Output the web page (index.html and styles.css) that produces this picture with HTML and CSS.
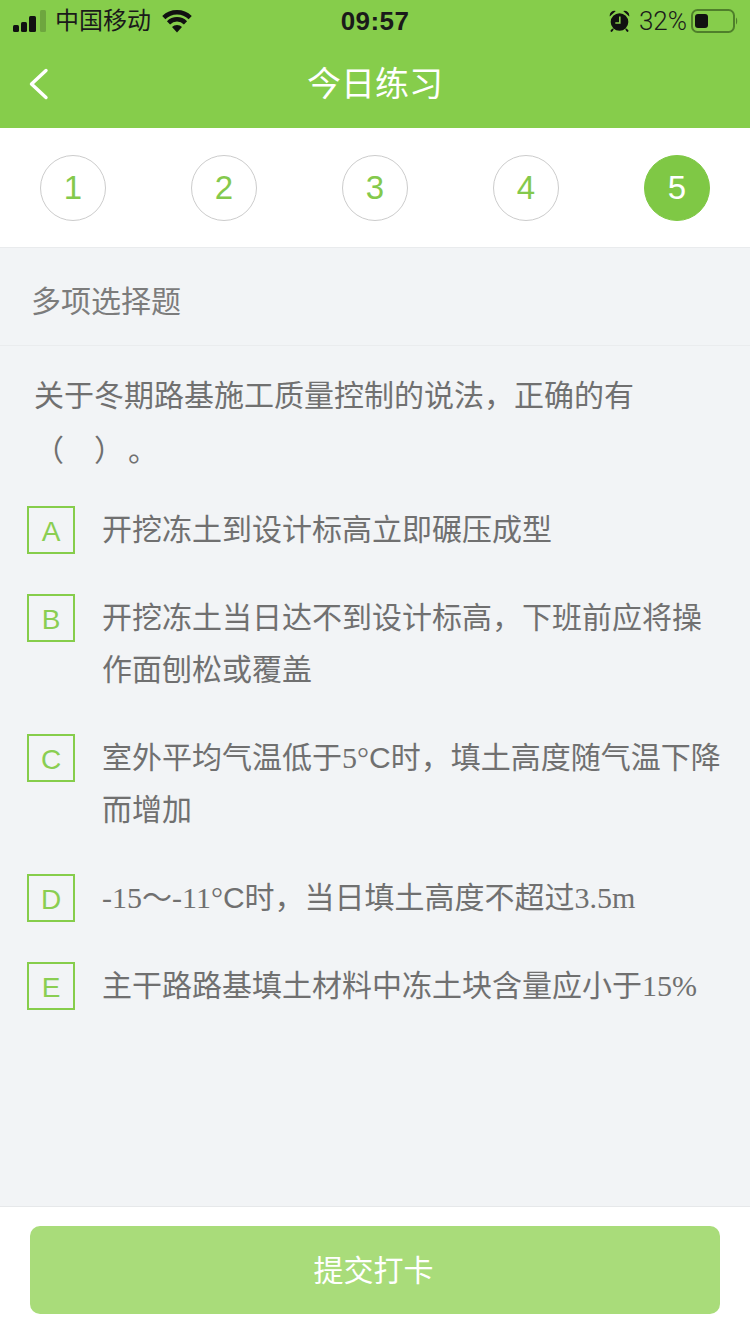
FILE: index.html
```html
<!DOCTYPE html>
<html lang="zh-CN">
<head>
<meta charset="utf-8">
<title>今日练习</title>
<link rel="stylesheet" href="styles.css">
</head>
<body>
<div class="page">
  <header class="top">
    <div class="status">
      <div class="status-left">
        <svg class="signal" width="34" height="22" viewBox="0 0 34 22"><rect x="0" y="15" width="6" height="7" rx="1.5" fill="#111"/><rect x="8" y="12" width="6" height="10" rx="1.5" fill="#111"/><rect x="16" y="6" width="7" height="16" rx="1.5" fill="#111"/><rect x="27" y="0" width="6" height="22" rx="1.5" fill="#6ea63f"/></svg>
        <span class="carrier">中国移动</span>
        <svg class="wifi" width="30" height="23" viewBox="0 0 30 23"><path d="M15 22.500l-5-5.500a7 7 0 0 1 10 0z" fill="#111"/><path d="M6.500 12.800a12.200 12.200 0 0 1 17 0" fill="none" stroke="#111" stroke-width="4.500"/><path d="M1.800 7.600a19 19 0 0 1 26.400 0" fill="none" stroke="#111" stroke-width="4.500"/></svg>
      </div>
      <div class="time">09:57</div>
      <div class="status-right">
        <svg class="alarm" width="21" height="22" viewBox="0 0 21 22"><circle cx="10.500" cy="12" r="8.800" fill="#111"/><path d="M.8 6.500a4.800 4.800 0 0 1 6-5.500zM20.200 6.500a4.800 4.800 0 0 0-6-5.500z" fill="#111"/><path d="M4 19l-2 2.500M17 19l2 2.500" stroke="#111" stroke-width="2"/><path d="M10.800 6.500v6.500h-4.500" fill="none" stroke="#86cd4b" stroke-width="1.600"/></svg>
        <span class="percent">32%</span>
        <svg class="battery" width="47" height="24" viewBox="0 0 47 24"><rect x="1" y="1" width="42" height="22" rx="5.500" fill="none" stroke="#4f7f2b" stroke-width="2"/><rect x="4" y="5" width="13" height="14" rx="3" fill="#111"/><path d="M45 8.500c1.600 .8 1.600 6.200 0 7z" fill="#4f7f2b"/></svg>
      </div>
    </div>
    <nav class="nav">
      <svg class="back" width="22" height="34" viewBox="0 0 22 34"><path d="M18 3.500L3.500 17 18 30.500" fill="none" stroke="#fff" stroke-width="3.400" stroke-linecap="round" stroke-linejoin="round"/></svg>
      <h1 class="title">今日练习</h1>
    </nav>
  </header>

  <div class="steps">
    <div class="step">1</div>
    <div class="step">2</div>
    <div class="step">3</div>
    <div class="step">4</div>
    <div class="step step-active">5</div>
  </div>

  <main class="content">
    <div class="kind">多项选择题</div>
    <p class="question">关于冬期路基施工质量控制的说法，正确的有<br>（　）<span class="dot">。</span></p>
    <ul class="options">
      <li class="option"><span class="letter">A</span><span class="text">开挖冻土到设计标高立即碾压成型</span></li>
      <li class="option"><span class="letter">B</span><span class="text">开挖冻土当日达不到设计标高，下班前应将操作面刨松或覆盖</span></li>
      <li class="option"><span class="letter">C</span><span class="text">室外平均气温低于<span class="serif">5°</span>C时，填土高度随气温下降而增加</span></li>
      <li class="option"><span class="letter">D</span><span class="text"><span class="serif">-15</span>～<span class="serif">-11°</span>C时，当日填土高度不超过<span class="serif">3.5m</span></span></li>
      <li class="option"><span class="letter">E</span><span class="text">主干路路基填土材料中冻土块含量应小于<span class="serif">15%</span></span></li>
    </ul>
  </main>

  <footer class="footer">
    <button class="submit" type="button">提交打卡</button>
  </footer>
</div>
</body>
</html>
```
FILE: styles.css
```css
* { box-sizing: border-box; }
html, body { margin: 0; padding: 0; }
body {
  font-family: "Liberation Sans", "Noto Sans CJK SC", sans-serif;
  color: #707070;
  background: #f2f4f6;
}
.page {
  width: 750px;
  height: 1334px;
  display: flex;
  flex-direction: column;
  overflow: hidden;
}
.top { background: #86cd4b; height: 128px; flex: none; }
.status {
  height: 40px;
  padding-top: 2px;
  display: grid;
  grid-template-columns: 1fr auto 1fr;
  align-items: center;
  color: #1a1a1a;
  font-size: 24px;
}
.status-left { display: flex; align-items: center; padding-left: 13px; }
.signal { margin-right: 8px; }
.carrier { line-height: 38px; }
.wifi { margin-left: 11px; }
.time { font-size: 26px; font-weight: 700; letter-spacing: .4px; line-height: 38px; }
.status-right { display: flex; align-items: center; justify-content: flex-end; padding-right: 12px; }
.alarm { margin-right: 9px; }
.percent { margin-right: 4px; font-family: Roboto, "Liberation Sans", sans-serif; font-weight: 300; font-size: 26px; line-height: 38px; }
.nav {
  position: relative;
  height: 88px;
  display: flex;
  align-items: center;
  justify-content: center;
}
.back { position: absolute; left: 28px; top: 27px; }
.title {
  margin: 0;
  font-size: 34px;
  font-weight: 400;
  color: #fff;
  line-height: 88px;
}
.steps {
  flex: none;
  height: 120px;
  background: #fff;
  border-bottom: 1px solid #e9ebed;
  display: flex;
  justify-content: space-between;
  padding: 27px 40px 0;
}
.step {
  width: 66px;
  height: 66px;
  border: 1px solid #ccc;
  border-radius: 50%;
  display: flex;
  align-items: center;
  justify-content: center;
  font-size: 33px;
  color: #84c94c;
}
.step-active { background: #7fc845; border-color: #7fc845; color: #fff; }
.content { flex: 1; min-height: 0; }
.kind {
  height: 98px;
  border-bottom: 1px solid #eaecee;
  padding-left: 31px;
  font-size: 30px;
  line-height: 107px;
  color: #7c7c7c;
}
.question {
  margin: 0;
  padding: 22px 34px 26px;
  font-size: 30px;
  line-height: 55px;
  color: #707070;
}
.dot { margin-left: 19px; }
.options {
  list-style: none;
  margin: 0;
  padding: 0 27px;
  display: flex;
  flex-direction: column;
  gap: 36px;
}
.option { display: flex; align-items: flex-start; }
.letter {
  flex: none;
  width: 48px;
  height: 48px;
  margin-top: 2px;
  padding-top: 3px;
  border: 2px solid #86cd4b;
  display: flex;
  align-items: center;
  justify-content: center;
  font-size: 28px;
  color: #8ace52;
}
.text {
  margin-left: 27px;
  font-size: 30px;
  line-height: 52px;
  color: #707070;
}
.serif { font-family: "Liberation Serif", "Noto Sans CJK SC", serif; }
.footer {
  flex: none;
  height: 128px;
  background: #fff;
  border-top: 1px solid #e6e8ea;
  padding: 19px 30px 0;
}
.submit {
  display: block;
  width: 690px;
  height: 88px;
  padding: 0 3px 4px 0;
  border: 0;
  border-radius: 10px;
  background: #a9dc7a;
  color: #fff;
  font-family: inherit;
  font-size: 30px;
}
```
